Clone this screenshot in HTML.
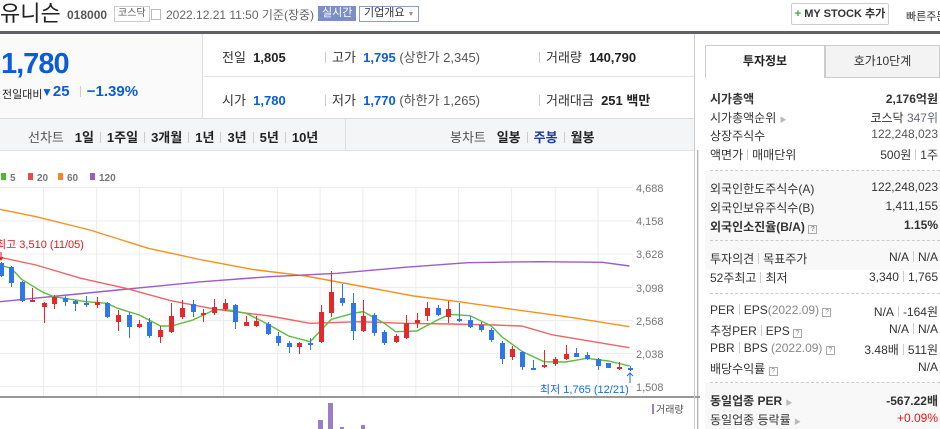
<!DOCTYPE html>
<html><head><meta charset="utf-8"><style>
*{margin:0;padding:0;box-sizing:border-box}
body{width:940px;height:429px;overflow:hidden;background:#fff;font-family:"Liberation Sans","Noto Sans CJK KR",sans-serif;color:#333;position:relative;font-size:12px}
.a{position:absolute;white-space:nowrap}
.b{font-weight:bold}
.blue{color:#0a5dd8}
.sep{display:inline-block;width:1px;height:11px;background:#ccc;margin:0 6px;vertical-align:-1px}
.rp .a{font-size:12px;color:#333}
.dash{position:absolute;left:710px;width:230px;border-top:1px dashed #ccc}
.q{display:inline-block;width:9px;height:9px;border:1px solid #aaa;font-size:7px;line-height:7px;text-align:center;color:#888;vertical-align:0}
</style></head><body>
<!-- header -->
<div class="a" style="left:0;top:0;font-size:22px;color:#222;line-height:28px">유니슨</div>
<div class="a b" style="left:67px;top:8px;font-size:12px;color:#555">018000</div>
<div class="a" style="left:114px;top:6px;border:1px solid #ccc;font-size:10px;padding:1px 3px;color:#555;line-height:12px">코스닥</div>
<div class="a" style="left:151px;top:9px;width:10px;height:11px;border:1px solid #bbb"></div>
<div class="a" style="left:166px;top:6px;font-size:12px;color:#666">2022.12.21 11:50 기준(장중)</div>
<div class="a" style="left:318px;top:6px;background:#7b8fc4;color:#fff;font-size:11px;padding:1px 4px;line-height:13px">실시간</div>
<div class="a" style="left:359px;top:6px;border:1px solid #8c9cc9;color:#334;font-size:11px;padding:0 4px;line-height:13px">기업개요 <span style="font-size:7px;color:#999">▼</span></div>
<div class="a b" style="left:791px;top:3px;width:98px;height:22px;border:1px solid #ccc;border-radius:2px;font-size:11px;line-height:20px;text-align:center;color:#333"><span style="color:#3a3">+</span> MY STOCK 추가</div>
<div class="a" style="left:906px;top:8px;font-size:11px;color:#333">빠른주문</div>
<div class="a" style="left:0;top:31px;width:940px;height:3px;background:#5f6166"></div>
<!-- price panel -->
<div class="a" style="left:0;top:34px;width:203px;height:85px;background:#fafafa;border-right:1px solid #ddd"></div>
<div class="a b blue" style="left:1px;top:48px;font-size:29px;letter-spacing:-1px">1,780</div>
<div class="a" style="left:2px;top:86px;font-size:11px;color:#222">전일대비</div>
<div class="a b blue" style="left:41px;top:83px;font-size:15px"><span style="font-size:12px">▼</span>25 <span class="sep"></span><span>−1.39%</span></div>
<div class="a" style="left:204px;top:76px;width:490px;border-top:1px solid #e3e3e3"></div>
<div class="a" style="left:222px;top:47px;font-size:13px;color:#333">전일 &nbsp;<b style="color:#222">1,805</b></div>
<div class="a" style="left:222px;top:90px;font-size:13px;color:#333">시가 &nbsp;<b class="blue">1,780</b></div>
<div class="a" style="left:325px;top:47px;font-size:13px"><span class="sep" style="margin-left:0"></span>고가 &nbsp;<b class="blue">1,795</b> <span style="color:#555">(상한가 2,345)</span></div>
<div class="a" style="left:325px;top:90px;font-size:13px"><span class="sep" style="margin-left:0"></span>저가 &nbsp;<b class="blue">1,770</b> <span style="color:#555">(하한가 1,265)</span></div>
<div class="a" style="left:539px;top:47px;font-size:13px"><span class="sep" style="margin-left:0"></span>거래량 &nbsp;<b style="color:#222">140,790</b></div>
<div class="a" style="left:539px;top:90px;font-size:13px"><span class="sep" style="margin-left:0"></span>거래대금 &nbsp;<b style="color:#222">251 백만</b></div>
<!-- tab row -->
<div class="a" style="left:0;top:118px;width:694px;height:33px;background:#f4f5f7;border-top:1px solid #ddd;border-bottom:1px solid #e3e3e3"></div>
<div class="a" style="left:345px;top:119px;width:1px;height:31px;background:#ddd"></div>
<div class="a" style="left:28px;top:127px;font-size:13px;color:#555">선차트 &nbsp;&nbsp;<b style="color:#222">1일</b><span class="sep"></span><b style="color:#222">1주일</b><span class="sep"></span><b style="color:#222">3개월</b><span class="sep"></span><b style="color:#222">1년</b><span class="sep"></span><b style="color:#222">3년</b><span class="sep"></span><b style="color:#222">5년</b><span class="sep"></span><b style="color:#222">10년</b></div>
<div class="a" style="left:450px;top:127px;font-size:13px;color:#555">봉차트 &nbsp;&nbsp;<b style="color:#222">일봉</b><span class="sep"></span><b style="color:#1a3d99">주봉</b><span class="sep"></span><b style="color:#222">월봉</b></div>
<!-- chart -->
<svg class="a" style="left:0;top:150px" width="700" height="279" viewBox="0 0 1557 837" preserveAspectRatio="none">
<g stroke="#ececec" stroke-width="1">
<path vector-effect="non-scaling-stroke" d="M0 113H1410M0 213H1410M0 312H1410M0 412H1410M0 512H1410M0 610H1410M0 710H1410"/>
<path vector-effect="non-scaling-stroke" d="M97 113V740M215 113V740M310 113V740M403 113V740M497 113V740M617 113V740M712 113V740M807 113V740M925 113V740M1020 113V740M1138 113V740M1235 113V740M1330 113V740"/>
</g>
<line x1="0" y1="741" x2="1557" y2="741" stroke="#777" stroke-width="1.5" vector-effect="non-scaling-stroke"/>
<line x1="1552" y1="0" x2="1552" y2="837" stroke="#999" stroke-width="1" vector-effect="non-scaling-stroke"/>
<g fill="none" stroke-width="1.4">
<polyline stroke="#f7901e" vector-effect="non-scaling-stroke" points="0,178 80,200 200,240 330,295 450,330 560,358 680,378 800,408 920,438 1020,455 1140,478 1260,500 1400,530"/>
<polyline stroke="#9a5cc8" vector-effect="non-scaling-stroke" points="0,455 150,435 300,415 450,395 600,380 750,370 900,352 1040,338 1200,335 1340,337 1400,348"/>
<polyline stroke="#ef6464" vector-effect="non-scaling-stroke" points="0,322 80,345 180,385 280,415 380,452 480,478 600,498 690,520 800,515 900,520 1000,522 1100,525 1160,528 1230,555 1320,575 1400,593"/>
<polyline stroke="#5cbd3b" vector-effect="non-scaling-stroke" points="0,345 25,355 48,388 97,428 120,440 192,455 238,460 262,475 310,495 357,528 381,528 429,510 476,480 500,478 548,490 595,522 642,558 690,575 737,508 785,490 808,485 855,520 880,545 927,543 973,510 1000,493 1045,497 1092,527 1116,560 1162,605 1210,635 1258,636 1305,625 1353,633 1401,648"/>
</g>
</svg>
<svg class="a" style="left:0;top:150px" width="700" height="279">
<g transform="translate(0,-150)">
<path stroke="#2f77e6" fill="none" d="M1.5 262V277M11.5 266V287M22.5 281V302M65.5 296V306M75.5 300V311M86.5 296V307M107.5 302V318M129.5 312V338M149.5 318V338M193.5 300V317M235.5 304V329M268.5 322V335M278.5 332V346M289.5 341V353M310.5 338V350M342.5 284V306M353.5 293V340M374.5 313V336M384.5 330V345M438.5 305V316M459.5 303V322M470.5 316V328M481.5 322V332M491.5 328V342M502.5 341V364M522.5 351V370M533.5 360V370M576.5 348V357M587.5 352V360M598.5 358V370M608.5 363V368M630.5 366V371"/>
<path fill="#2f77e6" d="M-1 263h5v13h-5zM9 267h5v16h-5zM20 282h5v19h-5zM63 298h5v4h-5zM73 301h5v3h-5zM84 303h5v2h-5zM105 303h5v14h-5zM127 315h5v12h-5zM147 322h5v14h-5zM191 304h5v8h-5zM233 305h5v17h-5zM266 324h5v10h-5zM276 336h5v7h-5zM287 343h5v4h-5zM308 343h5v2h-5zM340 298h5v5h-5zM351 303h5v28h-5zM372 315h5v18h-5zM382 332h5v11h-5zM436 308h5v7h-5zM457 319h5v2h-5zM468 320h5v7h-5zM479 325h5v5h-5zM489 330h5v10h-5zM500 343h5v16h-5zM520 352h5v15h-5zM531 368h5v2h-5zM574 353h5v4h-5zM585 355h5v4h-5zM596 359h5v7h-5zM606 363h5v5h-5zM628 368h5v2h-5z"/>
<path stroke="#e32a2a" fill="none" d="M32.5 288V302M44.5 302V323M54.5 295V309M97.5 297V308M118.5 310V331M139.5 320V328M160.5 326V343M171.5 303V333M182.5 300V319M203.5 309V322M214.5 299V315M225.5 299V311M246.5 316V326M256.5 316V327M299.5 342V354M321.5 305V343M331.5 271V317M363.5 300V332M396.5 334V343M406.5 315V339M417.5 313V328M427.5 302V321M448.5 301V323M512.5 346V360M544.5 350V368M555.5 357V366M566.5 345V360M619.5 362V370"/>
<path fill="#e32a2a" d="M30 300h5v2h-5zM42 303h5v4h-5zM52 297h5v7h-5zM95 302h5v3h-5zM116 315h5v7h-5zM137 324h5v3h-5zM158 330h5v7h-5zM169 316h5v16h-5zM180 308h5v9h-5zM201 313h5v2h-5zM212 307h5v6h-5zM223 303h5v6h-5zM244 322h5v4h-5zM254 321h5v5h-5zM297 343h5v4h-5zM319 312h5v30h-5zM329 292h5v21h-5zM361 316h5v15h-5zM394 336h5v6h-5zM404 323h5v15h-5zM415 320h5v3h-5zM425 308h5v8h-5zM446 309h5v8h-5zM510 349h5v8h-5zM542 365h5v2h-5zM553 359h5v5h-5zM564 354h5v5h-5zM617 367h5v2h-5z"/>
</g>
<rect x="318" y="270" width="5" height="9" fill="#9b7fc4"/><rect x="328" y="253" width="5" height="26" fill="#9b7fc4"/><rect x="340" y="277" width="4" height="2" fill="#9b7fc4"/><rect x="361" y="275" width="4" height="4" fill="#9b7fc4"/>
<rect x="652" y="254" width="2" height="10" fill="#9b7fc4"/>
<text x="656" y="263" font-size="10" fill="#555" font-family="Liberation Sans,Noto Sans CJK KR,sans-serif">거래량</text>
<g font-size="11" fill="#777" font-family="Liberation Sans,sans-serif"><text x="636" y="42">4,688</text><text x="636" y="75">4,158</text><text x="636" y="108">3,628</text><text x="636" y="142">3,098</text><text x="636" y="175">2,568</text><text x="636" y="208">2,038</text><text x="636" y="241">1,508</text></g>
<g font-size="10" font-weight="bold" fill="#777" font-family="Liberation Sans,sans-serif"><rect x="1" y="23" width="5" height="7" fill="#4cb830"/><text x="10" y="31">5</text><rect x="28" y="23" width="5" height="7" fill="#e84b4b"/><text x="37" y="31">20</text><rect x="58" y="23" width="5" height="7" fill="#f38a1c"/><text x="67" y="31">60</text><rect x="90" y="23" width="5" height="7" fill="#9a5cc8"/><text x="99" y="31">120</text></g>
<text x="-4" y="98" font-size="11" fill="#e4161b" font-family="Liberation Sans,Noto Sans CJK KR,sans-serif">최고 3,510 (11/05)</text>
<path d="M1 102V110M-1 107L1 110L3 107" stroke="#e4161b" fill="none"/>
<text x="540" y="243" font-size="11" fill="#1a6fd8" font-family="Liberation Sans,Noto Sans CJK KR,sans-serif">최저 1,765 (12/21)</text>
<path d="M630 223V233M627 226L630 223L633 226" stroke="#1a6fd8" fill="none"/>
</svg>
<!-- right panel -->
<div class="a" style="left:694px;top:34px;width:1px;height:395px;background:#ccc"></div>
<div class="a b" style="left:705px;top:45px;width:120px;height:33px;border:1px solid #ccc;border-bottom:none;text-align:center;line-height:31px;font-size:12px;color:#222;background:#fff">투자정보</div>
<div class="a" style="left:825px;top:45px;width:115px;height:33px;border:1px solid #ccc;background:#f3f3f3;text-align:center;line-height:31px;font-size:12px;color:#333">호가10단계</div>
<div class="a" style="left:705px;top:171px;width:235px;height:99px;background:#f8f8f8"></div>
<div class="a" style="left:705px;top:383px;width:235px;height:46px;background:#f8f8f8"></div>
<div class="rp">
<div class="a b" style="left:710px;top:90px;color:#333">시가총액</div><div class="a b" style="right:2px;top:90px">2,176억원</div>
<div class="a" style="left:710px;top:109px">시가총액순위 <span style="font-size:7px;color:#bbb">▶</span></div><div class="a" style="right:2px;top:109px">코스닥 <span style="color:#667">347위</span></div>
<div class="a" style="left:710px;top:127px">상장주식수</div><div class="a" style="right:2px;top:127px;color:#555">122,248,023</div>
<div class="a" style="left:710px;top:146px">액면가<span class="sep" style="margin:0 4px"></span>매매단위</div><div class="a" style="right:2px;top:146px">500원<span class="sep" style="margin:0 4px"></span>1주</div>
<div class="dash" style="top:170px"></div>
<div class="a" style="left:710px;top:180px">외국인한도주식수(A)</div><div class="a" style="right:2px;top:180px">122,248,023</div>
<div class="a" style="left:710px;top:199px">외국인보유주식수(B)</div><div class="a" style="right:2px;top:199px">1,411,155</div>
<div class="a b" style="left:710px;top:218px">외국인소진율(B/A) <span class="q">?</span></div><div class="a b" style="right:2px;top:218px">1.15%</div>
<div class="dash" style="top:240px"></div>
<div class="a" style="left:710px;top:250px">투자의견<span class="sep" style="margin:0 4px"></span>목표주가</div><div class="a" style="right:2px;top:250px">N/A<span class="sep" style="margin:0 4px"></span>N/A</div>
<div class="a" style="left:710px;top:269px">52주최고<span class="sep" style="margin:0 4px"></span>최저</div><div class="a" style="right:2px;top:270px">3,340<span class="sep" style="margin:0 4px"></span>1,765</div>
<div class="dash" style="top:293px"></div>
<div class="a" style="left:710px;top:303px">PER<span class="sep" style="margin:0 4px"></span>EPS<span style="color:#888">(2022.09)</span> <span class="q">?</span></div><div class="a" style="right:2px;top:303px">N/A<span class="sep" style="margin:0 4px"></span>-164원</div>
<div class="a" style="left:710px;top:322px">추정PER<span class="sep" style="margin:0 4px"></span>EPS <span class="q">?</span></div><div class="a" style="right:2px;top:322px">N/A<span class="sep" style="margin:0 4px"></span>N/A</div>
<div class="a" style="left:710px;top:341px">PBR<span class="sep" style="margin:0 4px"></span>BPS <span style="color:#888">(2022.09)</span> <span class="q">?</span></div><div class="a" style="right:2px;top:341px">3.48배<span class="sep" style="margin:0 4px"></span>511원</div>
<div class="a" style="left:710px;top:360px">배당수익률 <span class="q">?</span></div><div class="a" style="right:2px;top:360px">N/A</div>
<div class="dash" style="top:382px"></div>
<div class="a b" style="left:710px;top:392px">동일업종 PER <span style="font-size:7px;color:#bbb">▶</span></div><div class="a b" style="right:2px;top:392px">-567.22배</div>
<div class="a" style="left:710px;top:411px">동일업종 등락률 <span style="font-size:7px;color:#bbb">▶</span></div><div class="a" style="right:2px;top:411px;color:#e4161b">+0.09%</div>
</div>
</body></html>
